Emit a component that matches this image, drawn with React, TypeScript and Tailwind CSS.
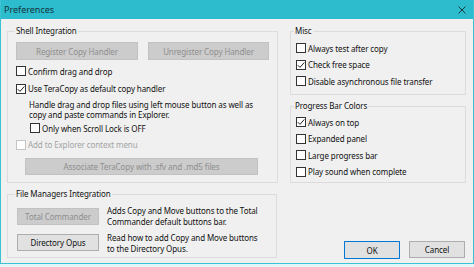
import React from "react";

const font = { fontFamily: '"Noto Sans", "Open Sans", sans-serif' };

function Check({ checked = false, disabled = false }: { checked?: boolean; disabled?: boolean }) {
  return (
    <span
      className={`inline-flex items-center justify-center w-[10px] h-[10px] shrink-0 bg-white border ${
        disabled ? "border-[#c4c4c4]" : "border-[#333333]"
      }`}
    >
      {checked && (
        <svg width="8" height="8" viewBox="0 0 8 8">
          <path d="M0.8 4.2 L3 6.4 L7.3 1.4" fill="none" stroke="#222" strokeWidth="1" />
        </svg>
      )}
    </span>
  );
}

function Row({ label, checked, disabled, cls = "" }: { label: string; checked?: boolean; disabled?: boolean; cls?: string }) {
  return (
    <div className={`flex items-center h-[16.5px] gap-[2px] ${cls}`}>
      <Check checked={checked} disabled={disabled} />
      <span className={disabled ? "text-[#a3a3a3]" : "text-[#111]"}>{label}</span>
    </div>
  );
}

function Btn({ label, disabled, cls = "" }: { label: string; disabled?: boolean; cls?: string }) {
  return (
    <div
      className={`flex items-center justify-center shrink-0 border ${
        disabled ? "bg-[#cccccc] border-[#c2c2c2] text-[#8e8e8e]" : "bg-[#e1e1e1] border-[#adadad] text-[#111]"
      } ${cls}`}
    >
      {label}
    </div>
  );
}

export default function App() {
  return (
    <div
      className="w-[474px] h-[267px] overflow-hidden bg-[#e4f6f9] text-[8px] tracking-[-0.1px] leading-[11px] whitespace-nowrap"
      style={font}
    >
      <div className="w-[474px] h-[264px] flex flex-col border border-t-0 border-[#3cc3d2] bg-[#f0f0f0]">
        <div className="h-[19px] shrink-0 bg-[#2cbccd] flex items-center justify-between pl-[3px] pr-[7px]">
          <span className="text-[9px] tracking-normal text-[#14343a]">Preferences</span>
          <svg width="8" height="8" viewBox="0 0 8 8">
            <path d="M0.5 0.5 L7.5 7.5 M7.5 0.5 L0.5 7.5" stroke="#1d3c42" strokeWidth="1" />
          </svg>
        </div>
        <div className="flex-1 flex pl-[6px] pt-[6px] gap-[13px]">
          {/* left column */}
          <div className="w-[270px] flex flex-col gap-[5px]">
            <fieldset className="border border-[#dcdcdc] px-[8px] h-[158px]">
              <legend className="px-[1px] ml-[-1px] leading-[12px] text-[#111]">Shell Integration</legend>
              <div className="flex gap-[10px] mt-[5px]">
                <Btn label="Register Copy Handler" disabled cls="w-[122px] h-[18px]" />
                <Btn label="Unregister Copy Handler" disabled cls="w-[121px] h-[18px]" />
              </div>
              <Row label="Confirm drag and drop" cls="mt-[3px]" />
              <Row label="Use TeraCopy as default copy handler" checked cls="mt-[1px]" />
              <div className="pl-[13px] text-[#111] mt-[3px]">
                <div className="leading-[10px]">Handle drag and drop files using left mouse button as well as</div>
                <div className="leading-[10px]">copy and paste commands in Explorer.</div>
                <Row label="Only when Scroll Lock is OFF" cls="ml-[1px]" />
              </div>
              <Row label="Add to Explorer context menu" disabled />
              <div className="pl-[9px] mt-[5px]">
                <Btn label="Associate TeraCopy with .sfv and .md5 files" disabled cls="w-[233px] h-[17px]" />
              </div>
            </fieldset>
            <fieldset className="border border-[#dcdcdc] px-[9px] h-[70px]">
              <legend className="px-[1px] ml-[-2px] leading-[12px] text-[#111]">File Managers Integration</legend>
              <div className="flex items-center gap-[8px] mt-[5px]">
                <Btn label="Total Commander" disabled cls="w-[82px] h-[17px]" />
                <div className="text-[#111] leading-[11px]">
                  <div>Adds Copy and Move buttons to the Total</div>
                  <div>Commander default buttons bar.</div>
                </div>
              </div>
              <div className="flex items-center gap-[8px] mt-[3px]">
                <Btn label="Directory Opus" cls="w-[82px] h-[17px]" />
                <div className="text-[#111] leading-[11px] mt-[2px]">
                  <div>Read how to add Copy and Move buttons</div>
                  <div>to the Directory Opus.</div>
                </div>
              </div>
            </fieldset>
          </div>
          {/* right column */}
          <div className="w-[176px] flex flex-col">
            <fieldset className="border border-[#dcdcdc] px-[5px] h-[70px]">
              <legend className="px-[1px] ml-[-2px] leading-[12px] text-[#111]">Misc</legend>
              <div className="mt-[3px]">
                <Row label="Always test after copy" />
                <Row label="Check free space" checked />
                <Row label="Disable asynchronous file transfer" />
              </div>
            </fieldset>
            <fieldset className="border border-[#dcdcdc] px-[5px] h-[83px] mt-[5px]">
              <legend className="px-[1px] ml-[-2px] leading-[12px] text-[#111]">Progress Bar Colors</legend>
              <div className="mt-[2px]">
                <Row label="Always on top" checked />
                <Row label="Expanded panel" />
                <Row label="Large progress bar" />
                <Row label="Play sound when complete" />
              </div>
            </fieldset>
            <div className="flex-1" />
            <div className="flex justify-end gap-[9px] mb-[4px] mr-[1px]">
              <Btn label="OK" cls="w-[56px] h-[18px] !border-[#0078d7]" />
              <Btn label="Cancel" cls="w-[56px] h-[17px]" />
            </div>
          </div>
        </div>
      </div>
    </div>
  );
}
